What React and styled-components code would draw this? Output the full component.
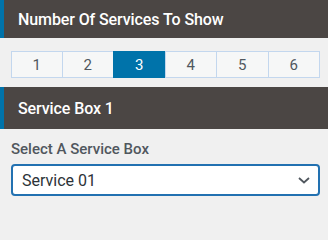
import React, { useState } from 'react';
import styled, { createGlobalStyle } from 'styled-components';

const GlobalStyle = createGlobalStyle`
  html, body {
    margin: 0;
    padding: 0;
    background: #f0f0f0;
  }
  body {
    font-family: Roboto, "Liberation Sans", Arial, sans-serif;
  }
`;

const counts = [1, 2, 3, 4, 5, 6];

const App = () => {
    const [count, setCount] = useState(3);

    return (
        <>
            <GlobalStyle />
            <Panel>
                <SectionHead $height={ 38 }>Number Of Services To Show</SectionHead>
                <CountBody>
                    <CountGroup>
                        { counts.map((n) => (
                            <CountButton
                                key={ n }
                                $active={ n === count }
                                onClick={ () => setCount(n) }
                            >
                                { n }
                            </CountButton>
                        )) }
                    </CountGroup>
                </CountBody>
                <SectionHead $height={ 42 }>Service Box 1</SectionHead>
                <FieldBody>
                    <Label htmlFor="service-box">Select A Service Box</Label>
                    <SelectWrap>
                        <Select id="service-box" defaultValue="01">
                            <option value="01">Service 01</option>
                            <option value="02">Service 02</option>
                            <option value="03">Service 03</option>
                        </Select>
                        <Chevron viewBox="0 0 12 7" aria-hidden="true">
                            <path d="M1 1l5 4.5L11 1" fill="none" stroke="#50575e" strokeWidth="1.8" />
                        </Chevron>
                    </SelectWrap>
                </FieldBody>
            </Panel>
        </>
    );
};

export default App;

const Panel = styled.div`
  width: 328px;
  display: flex;
  flex-direction: column;
  background: #f0f0f0;
`;

const SectionHead = styled.div`
  height: ${ (p) => p.$height }px;
  display: flex;
  align-items: center;
  padding-left: 14px;
  background: #4b4644;
  border-left: 4px solid #0073aa;
  box-sizing: border-box;
  color: #ffffff;
  font-size: 16px;
  font-weight: 500;
  letter-spacing: -0.1px;
`;

const CountBody = styled.div`
  padding: 13px 8px 9px 11px;
`;

const CountGroup = styled.div`
  display: grid;
  grid-template-columns: repeat(6, 1fr);
  height: 27px;
`;

const CountButton = styled.button`
  margin: 0;
  margin-left: -1px;
  padding: 0;
  border: 1px solid ${ (p) => (p.$active ? '#0073aa' : '#c3d7ee') };
  background: ${ (p) => (p.$active ? '#0073aa' : '#f6f7f7') };
  color: ${ (p) => (p.$active ? '#ffffff' : '#50575e') };
  font-family: Roboto, "Liberation Sans", Arial, sans-serif;
  font-size: 15px;
  cursor: pointer;
  &:first-child {
    margin-left: 0;
  }
`;

const FieldBody = styled.div`
  display: flex;
  flex-direction: column;
  padding: 11px 8px 6px 11px;
`;

const Label = styled.label`
  color: #50575e;
  font-size: 15px;
  font-weight: 500;
  margin-bottom: 6px;
`;

const SelectWrap = styled.div`
  position: relative;
`;

const Select = styled.select`
  width: 100%;
  height: 32px;
  padding: 0 30px 0 9px;
  appearance: none;
  background: #ffffff;
  border: 2px solid #2271b1;
  border-radius: 4px;
  color: #2c3338;
  font-family: Roboto, "Liberation Sans", Arial, sans-serif;
  font-size: 16px;
  outline: none;
`;

const Chevron = styled.svg`
  position: absolute;
  right: 10px;
  top: 13px;
  width: 12px;
  height: 7px;
  pointer-events: none;
`;
